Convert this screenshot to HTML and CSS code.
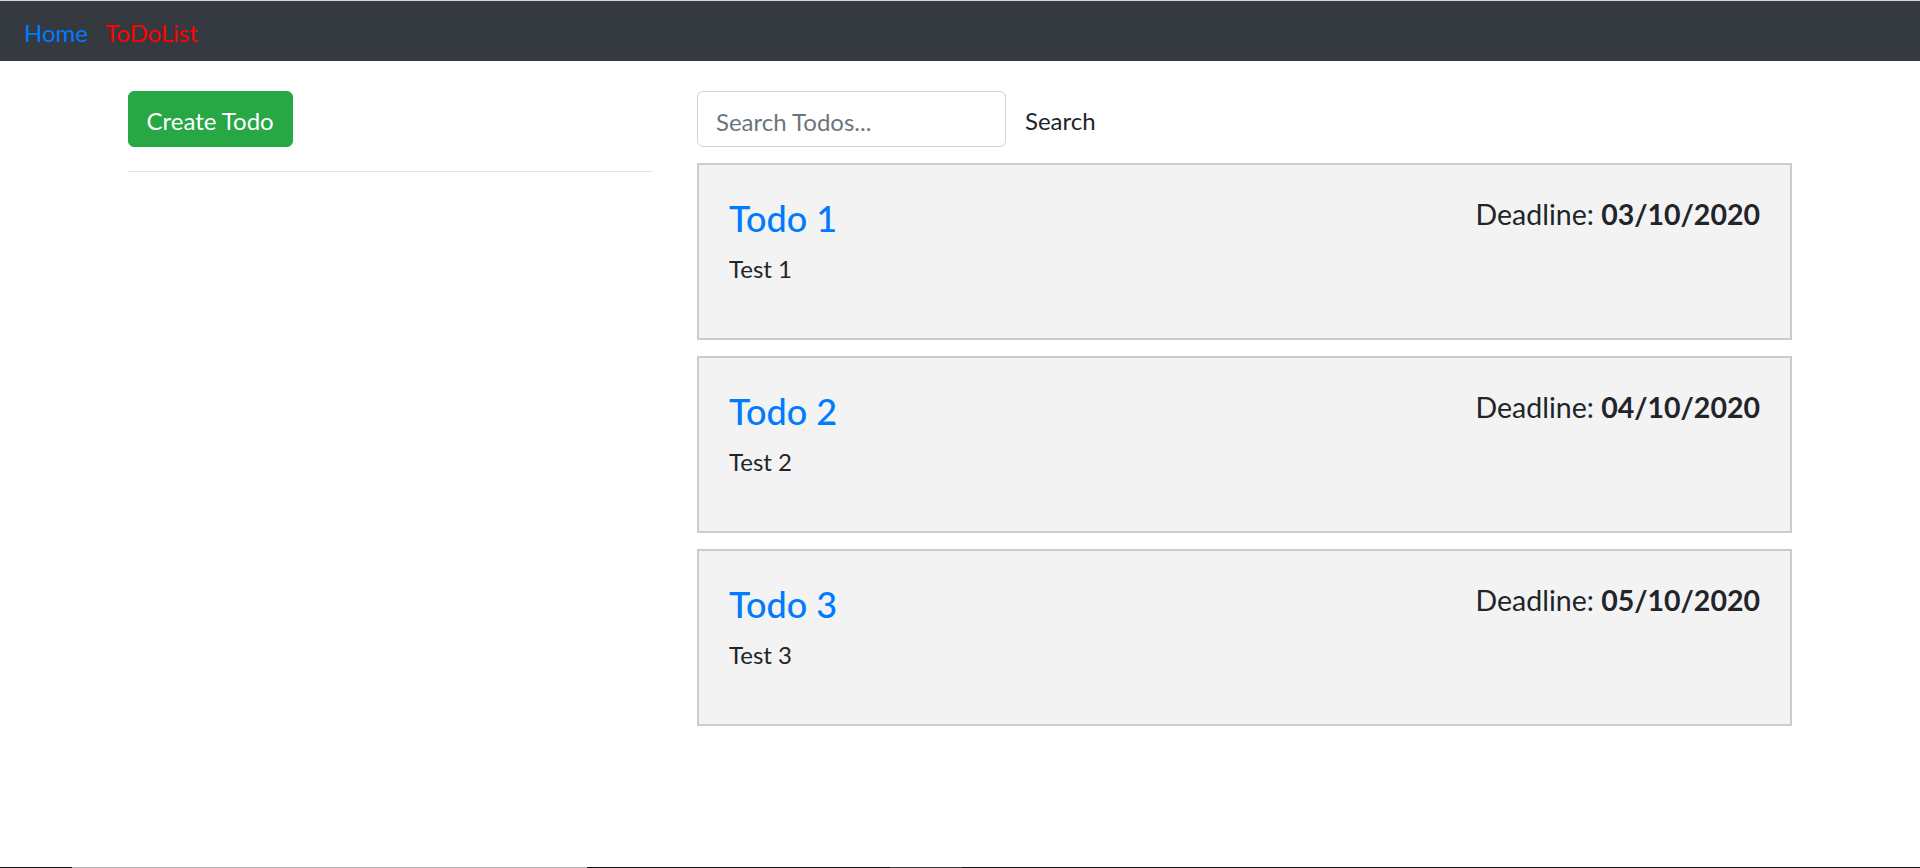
FILE: index.html
```html
<!DOCTYPE html>
<html lang="en">
<head>
<meta charset="utf-8">
<title>ToDoList</title>
<link rel="stylesheet" href="styles.css">
</head>
<body>
<div class="page">
  <nav class="navbar">
    <a class="nav-home" href="#">Home</a>
    <a class="nav-brand" href="#">ToDoList</a>
  </nav>
  <main class="container">
    <section class="col-left">
      <button class="btn-create" type="button">Create Todo</button>
      <hr class="divider">
    </section>
    <section class="col-right">
      <form class="search-row">
        <input class="search-input" type="text" placeholder="Search Todos...">
        <button class="btn-search" type="button">Search</button>
      </form>
      <div class="todo-list">
        <article class="todo-card">
          <div class="todo-head">
            <h3 class="todo-title">Todo 1</h3>
            <h5 class="todo-deadline">Deadline: <strong>03/10/2020</strong></h5>
          </div>
          <p class="todo-body">Test 1</p>
        </article>
        <article class="todo-card">
          <div class="todo-head">
            <h3 class="todo-title">Todo 2</h3>
            <h5 class="todo-deadline">Deadline: <strong>04/10/2020</strong></h5>
          </div>
          <p class="todo-body">Test 2</p>
        </article>
        <article class="todo-card">
          <div class="todo-head">
            <h3 class="todo-title">Todo 3</h3>
            <h5 class="todo-deadline">Deadline: <strong>05/10/2020</strong></h5>
          </div>
          <p class="todo-body">Test 3</p>
        </article>
      </div>
    </section>
  </main>
  <div class="bottom-strip">
    <span class="strip-a"></span>
    <span class="strip-b"></span>
    <span class="strip-c"></span>
    <span class="strip-d"></span>
  </div>
</div>
</body>
</html>
```

FILE: styles.css
```css
* { box-sizing: border-box; }

html, body {
  margin: 0;
  padding: 0;
  height: 100%;
}

body {
  font-family: Lato, "Open Sans", sans-serif;
  font-size: 24px;
  line-height: 1.5;
  color: #212529;
  background: #fff;
}

.page {
  display: flex;
  flex-direction: column;
  height: 100vh;
}

.navbar {
  display: flex;
  align-items: center;
  height: 61px;
  border-top: 1px solid #d6d6d6;
  background: #343a40;
  padding: 3px 24px 0;
  flex: none;
}

.navbar a {
  text-decoration: none;
  font-size: 24px;
  line-height: 36px;
}

.nav-home {
  color: #007bff;
  margin-right: 17px;
}

.nav-brand {
  color: #ff0000;
}

.container {
  flex: 1;
  display: flex;
  align-items: flex-start;
  gap: 44.5px;
  padding: 30px 127px 0 127.5px;
}

.col-left {
  width: 525px;
  flex: none;
}

.col-right {
  width: 1095px;
  flex: none;
}

.btn-create {
  display: block;
  font-family: inherit;
  font-size: 24px;
  line-height: 36px;
  padding: 11px 18px 7px;
  color: #fff;
  background: #28a745;
  border: 1.5px solid #28a745;
  border-radius: 6px;
}

.divider {
  margin: 24px 0 0;
  border: 0;
  border-top: 1.5px solid rgba(0, 0, 0, 0.1);
}

.search-row {
  display: flex;
  align-items: center;
  margin: 0;
}

.search-input {
  width: 309px;
  height: 56px;
  font-family: inherit;
  font-size: 24px;
  padding: 11px 18px 7px;
  color: #495057;
  background: #fff;
  border: 1.5px solid #ced4da;
  border-radius: 6px;
  outline: none;
}

.search-input::placeholder {
  color: #6c757d;
}

.btn-search {
  font-family: inherit;
  font-size: 24px;
  line-height: 36px;
  padding: 11px 18px 7px;
  color: #212529;
  background: transparent;
  border: 1.5px solid transparent;
  border-radius: 6px;
}

.todo-list {
  display: flex;
  flex-direction: column;
  gap: 16px;
  margin-top: 16px;
}

.todo-card {
  background: #f3f3f3;
  border: 2px solid #cccccc;
  padding: 33px 30px 27px;
}

.todo-head {
  display: flex;
  justify-content: space-between;
  align-items: flex-start;
}

.todo-title {
  margin: 0 0 12px;
  font-size: 36px;
  line-height: 41px;
  font-weight: 500;
  color: #007bff;
}

.todo-deadline {
  margin: 0;
  font-size: 28.5px;
  line-height: 33px;
  font-weight: 400;
  color: #212529;
}

.todo-deadline strong {
  font-weight: 700;
}

.todo-body {
  margin: 0 0 24px;
  font-size: 24px;
  line-height: 36px;
}

.bottom-strip {
  flex: none;
  display: flex;
  height: 1px;
  background: #111;
}

.strip-a { width: 72px; }
.strip-b { width: 515px; background: #b4b4b4; }
.strip-c { width: 303px; }
.strip-d { width: 72px; background: #3a3a3a; }
```
